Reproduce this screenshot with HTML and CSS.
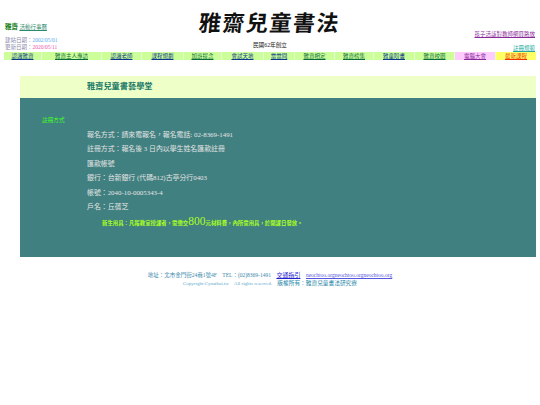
FILE: index.html
```html
<!DOCTYPE html>
<html lang="zh-Hant">
<head>
<meta charset="utf-8">
<title>雅齋兒童書藝學堂</title>
<link rel="stylesheet" href="styles.css">
</head>
<body>
<header class="top">
  <div class="top-left">
    <p class="brand"><b>雅齋</b> <a href="#">活動行事曆</a></p>
    <p class="date">建站日期：<span class="blue">2002/05/01</span></p>
    <p class="date">更新日期：<span class="pink">2020/05/11</span></p>
  </div>
  <div class="top-center">
    <div class="logo">雅齋兒童書法</div>
    <div class="founded">民國62年創立</div>
  </div>
  <div class="top-right">
    <a class="purple" href="#">孩子活該對教師網頁路放</a>
    <a class="teal" href="#">註冊規範</a>
  </div>
</header>
<nav class="nav">
  <a class="navy" href="#">認識雅齋</a>
  <a href="#">雅齋主人專訪</a>
  <a class="navy" href="#">認識老師</a>
  <a class="navy" href="#">課程規劃</a>
  <a href="#">加班提念</a>
  <a class="navy" href="#">會試天地</a>
  <a class="navy" href="#">當當問</a>
  <a href="#">雅齋相定</a>
  <a href="#">雅齋榜集</a>
  <a class="navy" href="#">雅童盼書</a>
  <a href="#">雅齋校園</a>
  <a class="lilac" href="#">電腦大會</a>
  <a class="yellow" href="#">最新課程</a>
</nav>
<main class="panel">
  <h1 class="title">雅齋兒童書藝學堂</h1>
  <section class="body">
    <h2 class="label">註冊方式</h2>
    <div class="lines">
      <p>報名方式：請來電報名，報名電話: 02-8369-1491</p>
      <p>註冊方式：報名後 3 日內以學生姓名匯款註冊</p>
      <p>匯款帳號</p>
      <p>銀行：台新銀行 (代碼812)古亭分行0403</p>
      <p>帳號：2040-10-0005343-4</p>
      <p>戶名：丘蒨芝</p>
    </div>
    <p class="note">新生用具：凡報教室授課者，需繳交<span class="big">800</span>元材料費，內所需用具，於開課日發放。</p>
  </section>
</main>
<footer class="foot">
  <p>地址：北市金門街24巷1號4F　TEL：(02)8369-1491　<a class="map" href="#">交通指引</a>　<a class="site" href="#">neochtoo.orgneochtoo.orgneochtoo.org</a></p>
  <p class="copy"><span>Copyright Cynathai.tw　All rights reserved.</span>　<span class="owner">版權所有：雅齋兒童書法研究寮</span></p>
</footer>
</body>
</html>
```
FILE: styles.css
```css
* { box-sizing: border-box; }
html, body { margin: 0; padding: 0; }
body { width: 540px; height: 405px; background: #fff; font-family: "Liberation Serif", "Noto Sans CJK TC", serif; color: #333; overflow: hidden; }
p, h1, h2 { margin: 0; font-weight: normal; }
a { color: inherit; }

.top { display: flex; height: 52px; padding: 0 5px; }
.top-left { width: 185px; padding-top: 23px; }
.brand { font-size: 5.5px; line-height: 8px; color: #2a8a6a; margin-bottom: 6px; }
.brand b { font-size: 6.5px; color: #0a7a10; }
.date { font-size: 5.5px; line-height: 7px; color: #8888aa; white-space: nowrap; }
.blue { color: #55aaee; }
.pink { color: #ee55aa; }
.top-center { width: 160px; display: flex; flex-direction: column; align-items: center; }
.logo { font-size: 22px; line-height: 30px; letter-spacing: 1.5px; margin-top: 9px; color: #111; font-weight: 700; white-space: nowrap; transform: skewX(-6deg); }
.founded { font-size: 5.7px; line-height: 8px; margin-top: 2px; color: #222; }
.top-right { flex: 1; display: flex; flex-direction: column; align-items: flex-end; font-size: 5.5px; line-height: 8px; padding-top: 30px; gap: 6px; }
.purple { color: #8a2a9a; }
.teal { color: #22aaa0; }

.nav { display: grid; grid-template-columns: 38px 60px 40px 42px 38px 42px 31px 40px 39px 41px 40px 41px 40px; margin: 0 4px; height: 8px; font-size: 5.5px; line-height: 8px; text-align: center; }
.nav a { background: #ccff99; color: #0a6a3a; white-space: nowrap; overflow: hidden; border-right: 1px solid #e4ffcc; }
.nav .navy { color: #0a3a8a; }
.nav .lilac { background: #ffccff; color: #8a2a9a; }
.nav .yellow { background: #ffff66; color: #ee3300; border-right: 0; }

.panel { margin: 16px 4px 0 20px; }
.title { height: 22px; background: #efffc8; color: #1a7a6a; font-size: 8.2px; font-weight: bold; line-height: 22px; padding-left: 67px; }
.body { height: 159px; background: #408080; padding: 18px 0 0 22px; }
.label { font-size: 5.7px; line-height: 8px; color: #44ff22; }
.lines { padding: 4px 0 0 45px; color: #e4e4e4; font-size: 6.9px; line-height: 14.4px; }
.note { margin: 1px 0 0 60px; font-size: 5.4px; line-height: 12px; color: #aaff22; white-space: nowrap; font-weight: bold; }
.big { font-size: 11.5px; font-weight: normal; }

.foot { margin-top: 14px; text-align: center; color: #3a88aa; font-size: 5.5px; line-height: 8px; }
.foot p { white-space: nowrap; }
.map { color: #2222cc; font-size: 6px; }
.site { color: #5555dd; }
.copy { color: #66aacc; font-size: 5px; }
.owner { color: #2a88aa; font-size: 5.7px; }
```
